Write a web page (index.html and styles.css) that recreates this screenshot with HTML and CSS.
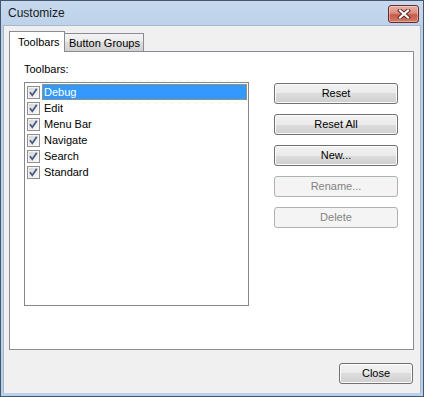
FILE: index.html
```html
<!DOCTYPE html>
<html>
<head>
<meta charset="utf-8">
<link rel="stylesheet" href="styles.css">
</head>
<body>
<div class="window">
  <div class="titlebar">
    <span class="title">Customize</span>
    <div class="close-x">
      <svg width="16" height="10" viewBox="0 0 16 10">
        <path d="M4 1.5 L12 8.5 M12 1.5 L4 8.5" stroke="#5a2420" stroke-width="4" stroke-linecap="square" fill="none"/>
        <path d="M4 1.5 L12 8.5 M12 1.5 L4 8.5" stroke="#ffffff" stroke-width="2.2" stroke-linecap="square" fill="none"/>
      </svg>
    </div>
  </div>
  <div class="client">
    <div class="tabs">
      <div class="tab tab-active">Toolbars</div>
      <div class="tab">Button Groups</div>
    </div>
    <div class="panel">
      <div class="label">Toolbars:</div>
      <div class="row">
        <div class="listbox">
          <div class="item selected"><span class="cb"></span><span class="txt">Debug</span></div>
          <div class="item"><span class="cb"></span><span class="txt">Edit</span></div>
          <div class="item"><span class="cb"></span><span class="txt">Menu Bar</span></div>
          <div class="item"><span class="cb"></span><span class="txt">Navigate</span></div>
          <div class="item"><span class="cb"></span><span class="txt">Search</span></div>
          <div class="item"><span class="cb"></span><span class="txt">Standard</span></div>
        </div>
        <div class="buttons">
          <div class="btn">Reset</div>
          <div class="btn">Reset All</div>
          <div class="btn">New...</div>
          <div class="btn disabled">Rename...</div>
          <div class="btn disabled">Delete</div>
        </div>
      </div>
    </div>
    <div class="footer">
      <div class="btn close-btn">Close</div>
    </div>
  </div>
</div>
</body>
</html>
```
FILE: styles.css
```css
* { box-sizing: border-box; }
html, body { margin: 0; padding: 0; background: #f0f0f0; }
body { font-family: "Liberation Sans", Arial, sans-serif; font-size: 11px; color: #000; }

.window {
  width: 424px;
  height: 397px;
  border: 1px solid #46566a;
  background: linear-gradient(to bottom, #c6d9ee 0px, #bcd2ea 26px, #b9d1ea 100%);
  display: flex;
  flex-direction: column;
  padding: 0 2px 3px 2px;
}

.titlebar {
  height: 25px;
  display: flex;
  align-items: flex-start;
  justify-content: space-between;
  padding: 0 2px 0 5px;
}
.title {
  font-size: 12px;
  line-height: 14px;
  margin-top: 5px;
  color: #1a1a1a;
}
.close-x {
  width: 31px;
  height: 18px;
  margin-top: 4px;
  border: 1px solid #6b2a26;
  border-radius: 3px;
  background: linear-gradient(to bottom, #e8b0a6 0%, #dc8b7e 45%, #c85a4c 55%, #d47a66 100%);
  box-shadow: inset 0 0 0 1px rgba(255,255,255,0.35);
  display: flex;
  align-items: center;
  justify-content: center;
}
.close-x svg { display: block; }

.client {
  flex: 1;
  background: #f0f0f0;
  border: 1px solid #a6b8cc;
  border-bottom: none;
  display: flex;
  flex-direction: column;
  padding: 5px 6px 9px 5px;
}

.tabs {
  display: flex;
  align-items: flex-end;
  height: 20px;
}
.tab {
  height: 18px;
  border: 1px solid #898c95;
  border-bottom: none;
  background: linear-gradient(to bottom, #f3f3f3 0%, #ebebeb 50%, #dedede 50%, #d0d0d0 100%);
  padding: 2px 3px 0 4px;
  line-height: 14px;
  border-left: none;
}
.tab-active {
  height: 21px;
  margin-bottom: -1px;
  position: relative;
  z-index: 1;
  background: #ffffff;
  border-left: 1px solid #898c95;
  width: 56px;
  padding: 3px 0 0 8px;
}

.panel {
  height: 299px;
  border: 1px solid #898c95;
  background: #ffffff;
  padding: 11px 15px 0 14px;
}
.label { line-height: 13px; }
.row {
  display: flex;
  margin-top: 6px;
}
.listbox {
  width: 226px;
  height: 224px;
  border: 1px solid #828790;
  background: #fff;
  padding: 1px 1px 0 1px;
}
.item {
  display: flex;
  align-items: center;
  height: 16px;
}
.cb {
  width: 13px;
  height: 13px;
  margin-left: 1px;
  margin-right: 2px;
  border: 1px solid #8f8f8f;
  background:
    url("data:image/svg+xml;utf8,<svg xmlns='http://www.w3.org/2000/svg' width='11' height='11' viewBox='0 0 11 11'><path d='M2 5.2 L4.3 8.2 L8.8 1.8' stroke='%234a5a8a' stroke-width='1.8' fill='none'/></svg>") center/11px 11px no-repeat,
    linear-gradient(135deg, #d4d4d4 0%, #eeeeee 70%, #ffffff 100%);
  box-shadow: inset 0 0 0 1px #f4f4f4;
}
.txt {
  flex: 1;
  height: 16px;
  line-height: 16px;
  padding-left: 2px;
}
.selected .txt {
  background: #3399ff;
  color: #fff;
  outline: 1px dotted #e88a2a;
  outline-offset: -1px;
}

.buttons {
  display: flex;
  flex-direction: column;
  gap: 10px;
  margin-left: 25px;
  margin-top: 1px;
}
.btn {
  width: 124px;
  height: 21px;
  border: 1px solid #707070;
  border-radius: 3px;
  background: linear-gradient(to bottom, #f2f2f2 0%, #ebebeb 50%, #dddddd 50%, #cfcfcf 100%);
  box-shadow: inset 0 0 0 1px #fcfcfc;
  text-align: center;
  line-height: 19px;
  color: #000;
}
.btn.disabled {
  border-color: #adb2b5;
  background: #f4f4f4;
  box-shadow: none;
  color: #838383;
}

.footer {
  display: flex;
  justify-content: flex-end;
  margin-top: 13px;
  padding-right: 1px;
}
.close-btn { width: 74px; }
```
